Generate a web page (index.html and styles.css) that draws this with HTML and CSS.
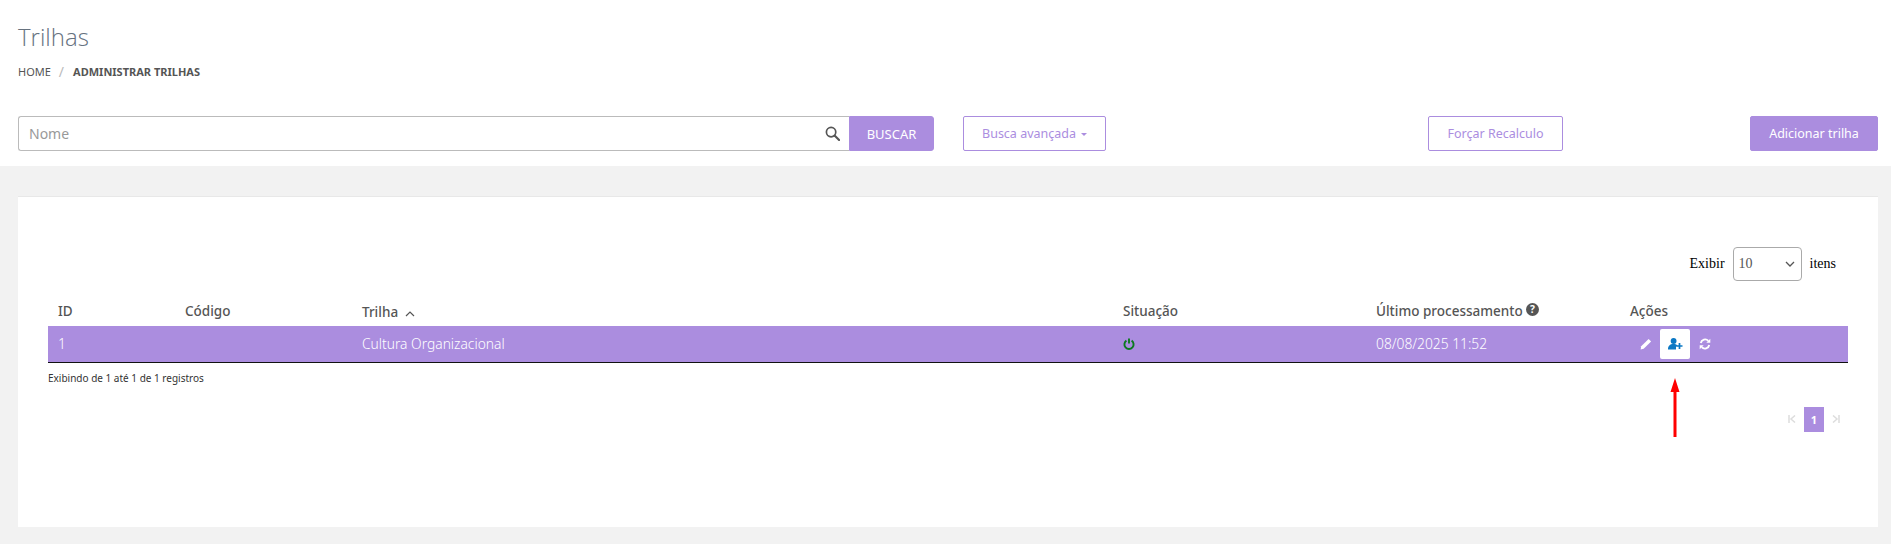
FILE: index.html
```html
<!DOCTYPE html>
<html>
<head>
  <title>Trilhas</title>
  <meta name="viewport" content="width=device-width, initial-scale=1.0">
  <link rel="stylesheet" href="styles.css">
</head>
<body>
  <header class="page-head">
    <h1 class="page-title">Trilhas</h1>
    <div class="breadcrumb">
      <span>HOME</span>
      <span class="crumb-sep">/</span>
      <b>ADMINISTRAR TRILHAS</b>
    </div>
    <div class="toolbar">
      <div class="search">
        <div class="search-box">
          <span class="placeholder">Nome</span>
          <svg class="search-icon" viewBox="0 0 16 16"><circle cx="6.5" cy="6.5" r="5" fill="none" stroke="#555" stroke-width="1.8"/><path d="M10.2 10.2L15 15" stroke="#555" stroke-width="2.2" stroke-linecap="round"/></svg>
        </div>
        <button class="btn btn-fill btn-buscar">BUSCAR</button>
      </div>
      <button class="btn btn-line btn-busca">Busca avançada<i class="caret"></i></button>
      <button class="btn btn-line btn-recalc">Forçar Recalculo</button>
      <button class="btn btn-fill btn-add">Adicionar trilha</button>
    </div>
  </header>

  <main class="content">
    <section class="card">
      <div class="show-items">
        <span>Exibir</span>
        <div class="fake-select">
          <span>10</span>
          <svg viewBox="0 0 10 6" width="10" height="6"><path d="M1 1l4 4 4-4" fill="none" stroke="#555" stroke-width="1.3"/></svg>
        </div>
        <span>itens</span>
      </div>

      <table class="grid">
        <colgroup>
          <col class="col-id"><col class="col-code"><col class="col-name"><col class="col-state"><col class="col-date"><col class="col-actions">
        </colgroup>
        <thead>
          <tr>
            <th>ID</th>
            <th>Código</th>
            <th class="sorted">Trilha <svg class="sort-icon" viewBox="0 0 10 6" width="10" height="6"><path d="M1 5l4-4 4 4" fill="none" stroke="#555" stroke-width="1.2"/></svg></th>
            <th>Situação</th>
            <th>Último processamento <svg viewBox="0 0 14 14" width="13" height="13"><circle cx="7" cy="7" r="7" fill="#555"/><text x="7" y="10.8" text-anchor="middle" class="q-mark">?</text></svg></th>
            <th>Ações</th>
          </tr>
        </thead>
        <tbody>
          <tr>
            <td>1</td>
            <td></td>
            <td>Cultura Organizacional</td>
            <td><svg class="power" viewBox="0 0 12 12" width="12" height="12"><path d="M3.4 2.6a4.6 4.6 0 1 0 5.2 0" fill="none" stroke="#0b7a1e" stroke-width="1.9"/><path d="M6 .5v5" stroke="#0b7a1e" stroke-width="1.9"/></svg></td>
            <td>08/08/2025 11:52</td>
            <td>
              <div class="actions">
                <svg viewBox="0 0 12 12" width="12" height="12"><path d="M8.6.9l2.5 2.5-7.4 7.4L.6 11.4l.6-3.1z" fill="#fff"/></svg>
                <span class="action-on">
                  <svg viewBox="0 0 15 12" width="15" height="12"><circle cx="5.6" cy="3" r="2.9" fill="#0b78c4"/><path d="M0 11.5c0-3.6 1.8-5.5 5.6-5.5 1.6 0 2.8.4 3.6 1.100v1.400H8v3z" fill="#0b78c4"/><path d="M11.500 5v6M8.500 8h6" stroke="#0b78c4" stroke-width="1.700"/></svg>
                </span>
                <svg class="refresh" viewBox="0 0 12 12" width="12" height="12"><path d="M1.800 5A4.400 4.400 0 0 1 9.300 2.800" fill="none" stroke="#fff" stroke-width="1.900"/><path d="M11.300 .8v4h-4z" fill="#fff"/><path d="M10.200 7A4.400 4.400 0 0 1 2.700 9.200" fill="none" stroke="#fff" stroke-width="1.900"/><path d="M.7 11.200v-4h4z" fill="#fff"/></svg>
              </div>
            </td>
          </tr>
        </tbody>
      </table>

      <div class="table-info">Exibindo de 1 até 1 de 1 registros</div>

      <div class="pager">
        <svg viewBox="0 0 8 8" width="8" height="8"><path d="M1 0v8M7 .5L3 4l4 3.500" fill="none" stroke="#ddd" stroke-width="1.500"/></svg>
        <span class="page-current">1</span>
        <svg viewBox="0 0 8 8" width="8" height="8"><path d="M7 0v8M1 .5L5 4 1 7.500" fill="none" stroke="#ddd" stroke-width="1.500"/></svg>
      </div>

      <!-- red arrow pointing at the button -->
      <svg class="arrow" viewBox="0 0 10 60" width="10" height="60"><path d="M5 0l4.500 14H6.500v45h-3V14H.5z" fill="#f00"/></svg>
    </section>
  </main>
</body>
</html>
```

FILE: styles.css
```css
* {
  box-sizing: border-box;
}
body {
  margin: 0;
  font-family: 'Noto Sans', sans-serif;
  color: #555;
  background-color: #f2f2f2;
  min-height: 100vh;
}
button {
  font-family: inherit;
  cursor: pointer;
}

/* header */
.page-head {
  height: 166px;
  padding: 20px 13px 0 18px;
  background-color: #fff;
}
.page-title {
  margin: 0;
  height: 34px;
  font-family: 'Open Sans', sans-serif;
  font-size: 24px;
  line-height: 34px;
  font-weight: 300;
  color: #66727f;
}
.breadcrumb {
  display: flex;
  align-items: center;
  gap: 8px;
  height: 18px;
  margin-top: 9px;
  font-size: 11px;
  line-height: 18px;
  color: #555;
}
.breadcrumb b {
  margin-left: 1px;
}
.crumb-sep {
  color: #bbb;
  font-size: 14px;
}
.toolbar {
  display: flex;
  margin-top: 35px;
  height: 35px;
}
.search {
  display: flex;
  flex: 0 0 916px;
}
.search-box {
  flex: 1;
  display: flex;
  align-items: center;
  justify-content: space-between;
  padding: 0 9px 0 10px;
  border: 1px solid #bbb;
  border-right: none;
  border-radius: 3px 0 0 3px;
}
.placeholder {
  font-size: 14px;
  color: #999;
}
.search-icon {
  width: 15px;
  height: 15px;
}
.btn {
  height: 35px;
  padding: 0;
  font-size: 12.5px;
  border-radius: 2px;
}
.btn-fill {
  color: #fff;
  background-color: #ab8ddf;
  border: 1px solid #ab8ddf;
}
.btn-line {
  color: #ab8ddf;
  background-color: #fff;
  border: 1px solid #ab8ddf;
}
.btn-buscar {
  width: 85px;
  font-size: 13px;
  border-radius: 0 3px 3px 0;
}
.btn-busca {
  width: 143px;
  margin-left: 29px;
}
.btn-recalc {
  width: 135px;
  margin-left: 322px;
}
.btn-add {
  width: 128px;
  margin-left: auto;
}
.caret {
  display: inline-block;
  margin-left: 5px;
  vertical-align: middle;
  border-top: 3px solid #ab8ddf;
  border-left: 3px solid transparent;
  border-right: 3px solid transparent;
}

/* card */
.content {
  padding: 30px 13px 17px 18px;
}
.card {
  position: relative;
  height: 331px;
  padding: 50px 30px 0;
  background-color: #fff;
  border-top: 1px solid #e8e8e8;
}
.show-items {
  display: flex;
  align-items: center;
  justify-content: flex-end;
  gap: 8px;
  padding-right: 12px;
  font-family: 'Liberation Serif', serif;
  font-size: 14px;
  color: #000;
}
.fake-select {
  display: flex;
  align-items: center;
  justify-content: space-between;
  width: 69px;
  height: 34px;
  padding: 0 6px 0 5px;
  color: #555;
  border: 1px solid #aaa;
  border-radius: 4px;
}

/* table */
.grid {
  width: 1800px;
  margin-top: 12px;
  border-collapse: collapse;
  table-layout: fixed;
}
.col-id { width: 127px; }
.col-code { width: 177px; }
.col-name { width: 761px; }
.col-state { width: 253px; }
.col-date { width: 254px; }
.col-actions { width: 228px; }
.grid th {
  height: 33px;
  padding: 2px 10px 0;
  font-size: 13.5px;
  font-weight: 500;
  text-align: left;
  color: #555;
  vertical-align: middle;
}
.grid .sorted {
  padding-top: 4px;
}
.sort-icon {
  margin-left: 3px;
}
.grid td {
  height: 36px;
  padding: 0 10px;
  font-size: 13.8px;
  font-weight: 300;
  color: #fff;
  background-color: #ab8ddf;
  border-bottom: 1px solid #111;
}
.q-mark {
  font-size: 11px;
  font-weight: 700;
  fill: #fff;
}
.power {
  display: block;
}
.actions {
  display: flex;
  align-items: center;
  gap: 8px;
  margin-left: 10px;
}
.refresh {
  margin-left: 1px;
}
.action-on {
  display: flex;
  align-items: center;
  justify-content: center;
  width: 30px;
  height: 30px;
  background-color: #fff;
  border-radius: 2px;
}
.table-info {
  margin-top: 8px;
  font-size: 10px;
  line-height: 14px;
  color: #333;
}
.pager {
  display: flex;
  align-items: center;
  justify-content: flex-end;
  gap: 8px;
  margin-top: 22px;
  padding-right: 8px;
}
.page-current {
  width: 20px;
  height: 25px;
  font-size: 11px;
  font-weight: 700;
  line-height: 25px;
  text-align: center;
  color: #fff;
  background-color: #ab8ddf;
}
.arrow {
  position: absolute;
  left: 1652px;
  top: 181px;
}
```
